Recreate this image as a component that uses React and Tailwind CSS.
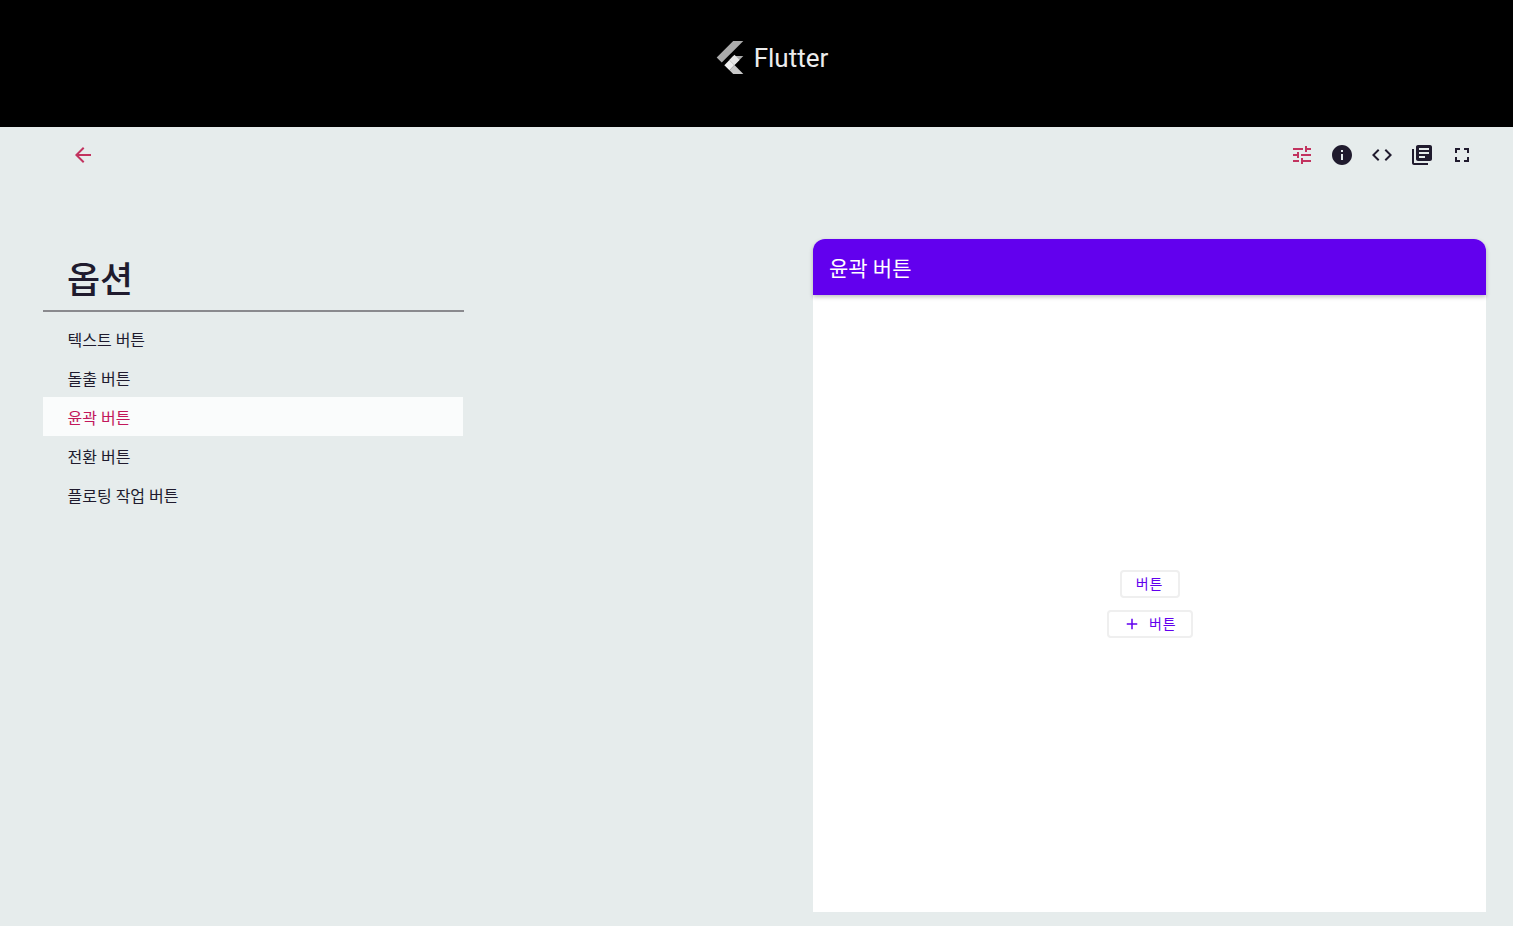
import React from "react";
import { MdTune, MdInfo, MdCode, MdLibraryBooks, MdFullscreen, MdArrowBack, MdAdd } from "react-icons/md";

const items = ["텍스트 버튼", "돌출 버튼", "윤곽 버튼", "전환 버튼", "플로팅 작업 버튼"];

function FlutterLogo() {
  return (
    <svg width="28" height="33" viewBox="9.8 10.4 146.1 181" className="shrink-0">
      <polygon fill="#ababab" points="37.7,128.9 9.8,101 100.4,10.4 155.9,10.4" />
      <polygon fill="#ababab" points="155.9,93.2 100.4,93.2 79.6,114 107.4,141.8" />
      <polygon fill="#e6e6e6" points="79.6,114 107.4,86 135.2,114 107.4,141.8" />
      <polygon fill="#c9c9c9" points="79.6,170.6 100.4,191.4 155.9,191.4 107.4,141.8" />
      <polygon fill="#efefef" points="51.8,142.8 79.6,114 107.4,141.8 79.6,170.6" />
    </svg>
  );
}

export default function App() {
  return (
    <div className="h-[926px] w-[1513px] overflow-hidden flex flex-col bg-[#e6ecec] font-['Roboto','Noto_Sans_CJK_KR',sans-serif] text-[#201b2e]">
      <header className="h-[127px] bg-black flex items-start justify-center pt-[41px] pl-[31px] gap-[10px]">
        <FlutterLogo />
        <span className="text-[26px] leading-[34px] text-[#ececec] font-['Roboto',sans-serif]">Flutter</span>
      </header>

      <div className="h-14 flex items-center justify-between pl-[63px] pr-[30.75px]">
        <button className="w-10 h-10 flex items-center justify-center text-[#c2335f]">
          <MdArrowBack size={24} />
        </button>
        <div className="flex items-center">
          <span className="w-10 h-10 flex items-center justify-center text-[#c2335f]"><MdTune size={24} /></span>
          <span className="w-10 h-10 flex items-center justify-center"><MdInfo size={24} /></span>
          <span className="w-10 h-10 flex items-center justify-center"><MdCode size={24} /></span>
          <span className="w-10 h-10 flex items-center justify-center"><MdLibraryBooks size={24} /></span>
          <span className="w-10 h-10 flex items-center justify-center"><MdFullscreen size={24} /></span>
        </div>
      </div>

      <div className="flex-1 flex justify-between pt-14 pb-[14px] pl-[43px] pr-[27px] min-h-0">
        <nav className="w-[421px]">
          <h2 className="h-[73px] pl-6 pt-[17px] text-[36px] leading-[50px] font-medium border-b-2 border-[#8a8a8e]">옵션</h2>
          <ul className="pt-[7px] pr-[1px]">
            {items.map((label, i) => (
              <li
                key={label}
                className={
                  "h-[39px] pl-[24.5px] pt-[4px] flex items-center text-base " +
                  (i === 2 ? "bg-[#fafcfc] text-[#c2185b]" : "")
                }
              >
                {label}
              </li>
            ))}
          </ul>
        </nav>

        <section className="w-[673px] flex flex-col bg-white rounded-t-xl">
          <div className="h-14 px-4 pt-[5px] flex items-center bg-[#6200ee] rounded-t-xl text-white text-[21px] shadow-[0_2px_4px_rgba(0,0,0,0.25)]">
            윤곽 버튼
          </div>
          <div className="flex-1 flex flex-col items-center justify-center gap-3">
            <button className="h-7 w-[60px] flex items-center justify-center rounded border-2 border-[#efefef] text-sm tracking-[0.75px] text-[#6200ee]">
              버튼
            </button>
            <button className="h-7 w-[86px] flex items-center justify-center gap-[8.5px] rounded border-2 border-[#efefef] text-sm tracking-[0.75px] text-[#6200ee]">
              <MdAdd size={18} />
              <span>버튼</span>
            </button>
          </div>
        </section>
      </div>
    </div>
  );
}
